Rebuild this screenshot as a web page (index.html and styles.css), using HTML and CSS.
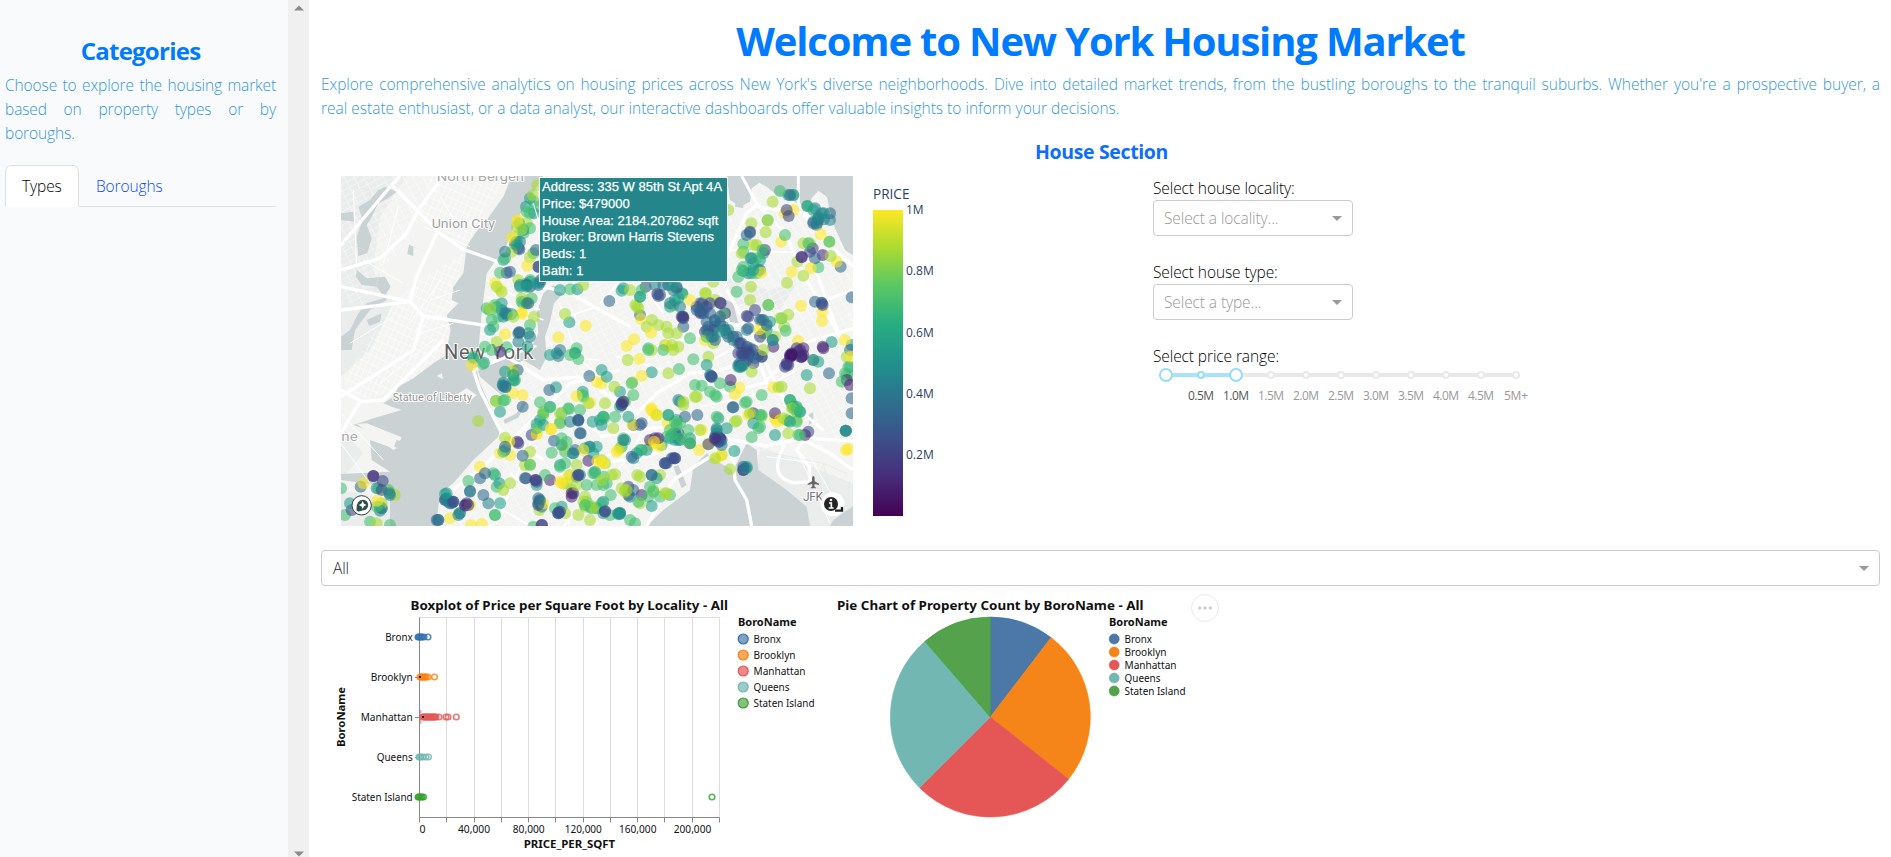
FILE: index.html
```html
<!DOCTYPE html>
<html lang="en">
<head>
<meta charset="utf-8">
<title>New York Housing Market</title>
<link rel="stylesheet" href="styles.css">
</head>
<body>
<div class="app">
  <aside class="sidebar">
    <h2 class="side-title">Categories</h2>
    <p class="side-text">Choose to explore the housing market based on property types or by boroughs.</p>
    <nav class="tabs"><a class="tab active">Types</a><a class="tab">Boroughs</a></nav>
  </aside>
  <div class="scrollbar">
    <svg width="10" height="6" viewBox="0 0 10 6"><path d="M0 5.5L5 0.5L10 5.5Z" fill="#8b8b8b"/></svg>
    <svg width="10" height="6" viewBox="0 0 10 6"><path d="M0 0.5L5 5.5L10 0.5Z" fill="#8b8b8b"/></svg>
  </div>
  <main class="main">
    <h1 class="title">Welcome to New York Housing Market</h1>
    <p class="intro"><span class="full">Explore comprehensive analytics on housing prices across New York's diverse neighborhoods. Dive into detailed market trends, from the bustling boroughs to the tranquil suburbs. Whether you're a prospective buyer, a</span> <span class="rest">real estate enthusiast, or a data analyst, our interactive dashboards offer valuable insights to inform your decisions.</span></p>
    <h3 class="section-title">House Section</h3>
    <div class="explore">
      <div class="map">
        <svg width="512" height="350" viewBox="33 18 1536 1050">
          <defs>
            <pattern id="streets" width="26" height="18" patternUnits="userSpaceOnUse" patternTransform="rotate(-28)"><path d="M0 0H26M0 0V18" stroke="#fff" stroke-width="3" fill="none"/><path d="M0 3H26" stroke="#e9ebea" stroke-width="1.5"/></pattern>
            <pattern id="streets2" width="16" height="24" patternUnits="userSpaceOnUse" patternTransform="rotate(24)"><path d="M0 0H16M0 0V24" stroke="#fff" stroke-width="3" fill="none"/></pattern>
          </defs>
          <rect x="33" y="18" width="1536" height="1050" fill="#f4f5f3"/>
          <path d="M33 18H230L150 140L130 300L190 400L120 540L33 620ZM1180 320L1320 360L1400 340L1350 420L1220 400ZM1290 830L1569 940V1068H1380L1280 900ZM33 770L100 850L33 930ZM33 960L180 990V1068H33Z" fill="#eaedec"/>
          <path d="M190 400L270 330L400 250L350 530L270 620L100 700L33 640ZM300 18H530L410 220L270 150Z" fill="url(#streets2)"/>
          <path d="M33 18H300L270 150L100 400H33ZM480 300L640 60L1569 18V820L1010 870L800 1068H330L510 800L440 620Z" fill="url(#streets)"/>
          <g fill="#cad2d4">
            <path d="M545 18L520 80L470 150L435 190L410 230L400 310L370 350L365 390L385 400L350 435L362 480L350 540L350 555L310 580L250 625L205 650L190 680L160 700L185 710L215 720L130 745L70 765L200 810L190 835L120 810L125 870L180 905L33 912V930L180 950V1068H318L330 970L370 940L430 870L505 800L510 775L450 640L440 600L455 430L470 310L530 225L560 150L640 18Z"/>
            <path d="M640 370L670 345L700 370L672 400L660 455L645 500L650 560L630 600L580 570L530 600L520 680L450 620L440 590L600 540L625 490L620 430Z"/>
            <path d="M1190 18H1569V256L1545 240L1515 175L1500 120L1490 80L1465 62L1445 85L1430 130L1390 90L1340 75L1310 50L1288 38L1265 55L1260 95L1230 110L1200 90Z"/>
            <path d="M165 50L200 65L175 85L145 100L120 150L110 165L125 205L112 250L85 258L80 200L98 150L85 110L120 90L145 60ZM33 130L70 125L72 155L33 150ZM80 300L110 325L165 320L182 350L160 385L110 400L85 430L60 480L33 500V540L65 540L75 480L120 420L170 390L140 350L95 345L78 320ZM110 450L155 430L150 455L118 468Z"/>
            <path d="M1090 890L1130 850L1170 880L1210 900L1250 820L1280 840L1285 900L1370 960L1430 1010L1440 1068H950L1000 1020L1080 960ZM1510 1050L1569 1008V1068H1500ZM1180 385L1210 400L1225 460L1200 455ZM1220 60L1240 70V115L1215 110Z"/>
            <path d="M1030 890L1045 885L1070 945L1055 955ZM1436 735L1450 725V755L1437 765ZM520 750L560 730L580 695L588 700L566 742L525 762ZM300 250L250 230V258L232 252L237 224Z"/>
          </g>
          <g fill="#f4f5f3"><path d="M80 762L110 760L215 802L210 812L160 800L200 835L190 840ZM385 670L410 655L440 675L412 700ZM320 618L335 610L340 628Z"/></g>
          <path d="M820 18L600 315M830 420L700 380" stroke="#f4f5f3" stroke-width="18" fill="none"/>
          <g stroke="#fff" fill="none" stroke-width="7" stroke-linejoin="round">
            <path stroke-width="10" d="M33 225L185 45L330 190L400 238L490 270L640 350L720 370L810 420L900 470M185 45L210 18M33 300L150 265L230 190L265 120L340 18M33 420L240 395L280 438L465 466M33 350L240 395M240 395L260 320L320 190"/>
            <path stroke-width="10" d="M33 660L95 695L160 690L240 610L340 510M33 790L90 695M280 440L250 540L33 680M430 600L450 660L510 780L640 870M430 600L530 560L640 630L760 620L820 650M330 990L460 890L640 720L720 640L870 600"/>
            <path stroke-width="10" d="M810 660L920 730L980 670L1080 610L1170 600L1300 560M810 800L1000 770L1180 805L1310 828L1420 805L1569 812M810 880L950 860L1130 790M950 1068L1030 930L1180 835M1205 820L1215 930L1250 990L1265 1068M1365 822Q1310 920 1390 938L1440 935L1438 890L1400 840L1420 810L1500 850L1569 900"/>
            <path stroke-width="9" d="M1235 18L1280 100L1365 190L1430 330L1560 550M1405 18V100L1500 225L1569 290M1190 260L1250 130L1280 105M1020 520L1200 470L1350 440L1569 360M1190 360L1280 520L1370 710L1390 810M1275 530L1310 640L1480 780M1569 475L1420 520L1300 640L1130 680M1460 310L1530 500M1280 110L1420 130L1500 240"/>
            <path stroke-width="5" d="M470 380L640 450M470 330L630 420M650 560L810 570M600 680L810 790M720 900L900 830M500 1060L600 820L650 690M400 950L600 1068M700 1068L900 860L980 700M810 400L900 300L1000 430M860 560L1000 600M450 490L620 530M1130 580L1200 540L1250 490M1110 710L1260 680L1400 600M540 910L720 1060M680 450L800 410M690 400L740 560L900 700M1190 240L1460 250"/>
            <path stroke-width="3" d="M70 60L80 290M100 270L220 340M205 110L160 280M190 440L60 520M340 320L240 460M310 510L150 640M280 170L420 230M330 80L380 160M390 360L300 390M370 460L270 490M33 730L160 870M33 820L120 940M1400 840L1500 1060M1440 860L1520 1000M1310 860L1460 880"/>
          </g>
          <g stroke="#dfe2e1" stroke-width="1.5" fill="none"><path d="M90 55L120 60V90M40 215L105 240M150 300L130 380M1330 850L1480 880L1500 960L1420 1010M1480 880L1550 910"/></g>
          <text class="city" x="342" y="568" font-size="60" textLength="268">New York</text>
          <g id="homes"></g>
          <g class="map-label" stroke="#fff" stroke-width="6" paint-order="stroke" stroke-linejoin="round">
            <text x="320" y="33" font-size="36" textLength="262" lengthAdjust="spacingAndGlyphs" fill="#aaa">North Bergen</text>
            <text x="305" y="174" font-size="39" textLength="190" lengthAdjust="spacingAndGlyphs" fill="#a2a2a2">Union City</text>
            <text x="188" y="692" font-size="33" textLength="238" fill="#929292">Statue of Liberty</text>
            <text x="34" y="814" font-size="38" textLength="49" lengthAdjust="spacingAndGlyphs" fill="#aaa">ne</text>
            <text x="1419" y="992" font-size="36" textLength="60" fill="#777">JFK</text>
          </g>
          <path d="M1450 918Q1454 918 1454 928V934L1467 941V945L1454 942L1453 949L1458 953V955H1442V953L1447 949L1446 942L1433 945V941L1446 934V928Q1446 918 1450 918Z" fill="#666"/>
          <g><circle cx="95" cy="1006" r="29" fill="#fff" stroke="#333f3d" stroke-width="3"/><path d="M80 1023Q77 991 98 989A16 16 0 1 1 99 1021Q89 1026 80 1023Z" fill="#2c504d"/><path d="M98 993L102 1001L110 1005L102 1009L98 1017L94 1009L86 1005L94 1001Z" fill="#fff"/></g>
          <circle cx="1508" cy="1003" r="36" fill="#fff" opacity=".85"/><path d="M1515 1022H1536V1011" stroke="#222" stroke-width="7" fill="none"/><circle cx="1503" cy="1002" r="21" fill="#242424"/><path d="M1497 999H1504V1013M1496 1014H1511" stroke="#fff" stroke-width="5" fill="none"/><circle cx="1503" cy="990" r="4" fill="#fff"/>
          <path d="M610 100L628 160" stroke="#fff" stroke-width="3"/>
        </svg>
        <div class="tip"><div>Address: 335 W 85th St Apt 4A</div><div>Price: $479000</div><div>House Area: 2184.207862 sqft</div><div>Broker: Brown Harris Stevens</div><div>Beds: 1</div><div>Bath: 1</div></div>
      </div>
      <div class="scale">
        <div class="scale-title">PRICE</div>
        <div class="scale-row"><div class="scale-bar"></div><div class="scale-ticks"><span>1M</span><span>0.8M</span><span>0.6M</span><span>0.4M</span><span>0.2M</span></div></div>
      </div>
      <form class="filters">
        <label>Select house locality:</label>
        <div class="select"><span>Select a locality...</span><i class="caret"></i></div>
        <label>Select house type:</label>
        <div class="select"><span>Select a type...</span><i class="caret"></i></div>
        <label>Select price range:</label>
        <svg class="slider" width="390" height="40" viewBox="0 0 390 40">
          <rect x="13" y="9" width="350" height="4" rx="2" fill="#e9e9e9"/><rect x="13" y="9" width="70" height="4" fill="#abe2fb"/>
          <g fill="#fff" stroke="#e9e9e9" stroke-width="2"><circle cx="118" cy="11" r="3"/><circle cx="153" cy="11" r="3"/><circle cx="188" cy="11" r="3"/><circle cx="223" cy="11" r="3"/><circle cx="258" cy="11" r="3"/><circle cx="293" cy="11" r="3"/><circle cx="328" cy="11" r="3"/><circle cx="363" cy="11" r="3"/></g>
          <g fill="#fff" stroke="#96dbfa" stroke-width="2"><circle cx="48" cy="11" r="3"/><circle cx="13" cy="11" r="6"/><circle cx="83" cy="11" r="6"/></g>
          <g class="marks"><text x="35" y="36" class="on" textLength="26">0.5M</text><text x="70" y="36" class="on" textLength="26">1.0M</text><text x="105" y="36" textLength="26">1.5M</text><text x="140" y="36" textLength="26">2.0M</text><text x="175" y="36" textLength="26">2.5M</text><text x="210" y="36" textLength="26">3.0M</text><text x="245" y="36" textLength="26">3.5M</text><text x="280" y="36" textLength="26">4.0M</text><text x="315" y="36" textLength="26">4.5M</text><text x="351" y="36" textLength="24">5M+</text></g>
        </svg>
      </form>
    </div>
    <div class="select wide"><span>All</span><i class="caret"></i></div>
    <svg class="charts" id="charts" width="1559" height="271" viewBox="321 586 1559 271"></svg>
  </main>
</div>
<script src="script.js"></script>
</body>
</html>
```
FILE: styles.css
```css
* { box-sizing: border-box; }
body { margin: 0; background: #fff; font-family: "Open Sans", "Noto Sans", sans-serif; font-size: 16px; color: #212529; overflow: hidden; }
.app { display: flex; height: 857px; }
.sidebar { width: 288px; padding: 36px 12px 0 5px; background: #f8fafc; flex: none; }
.scrollbar { width: 21px; padding: 5px 0 0; background: #f0f0f0; flex: none; display: flex; flex-direction: column; align-items: center; justify-content: space-between; }
.side-title { margin: 0; font-size: 24px; line-height: 29px; letter-spacing: -.75px; text-align: center; color: #007bff; }
.side-text, .intro { margin: 0; color: #3498db; font-size: 15.5px; font-weight: 300; line-height: 24px; text-align: justify; }
.side-text { margin-top: 8px; letter-spacing: -.1px; }
.tabs { display: flex; margin-top: 20px; border-bottom: 1px solid #dee2e6; height: 42px; }
.tab { padding: 8px 16px 0; height: 42px; line-height: 24px; font-size: 15.5px; font-weight: 300; color: #0d4bff; letter-spacing: -.1px; border: 1px solid transparent; }
.tab.active { background: #fff; color: #000; width: 74px; border-color: #dee2e6 #dee2e6 #fff; border-radius: 6px 6px 0 0; }
.main { flex: 1; min-width: 0; padding: 17px 11px 0 12px; overflow: hidden; }
.title { margin: 0; text-align: center; color: #007bff; font-size: 40px; line-height: 48px; letter-spacing: -1.18px; white-space: nowrap; }
.intro { margin-top: 7px; }
.intro span { display: block; white-space: nowrap; }
.intro .full { text-align-last: justify; letter-spacing: -.05px; }
.section-title { margin: 20px 0 0; padding-left: 2px; text-align: center; color: #0d6efd; font-size: 19.5px; line-height: 24px; letter-spacing: -.35px; }
.explore { display: flex; height: 370px; padding-left: 20px; margin-top: 12px; }
.map { position: relative; width: 512px; height: 350px; flex: none; overflow: hidden; }
.map svg { display: block; }
.map-label { font-family: Roboto, sans-serif; font-weight: 400; }
.city { font-family: Roboto, sans-serif; fill: #606060; stroke: #fff; stroke-width: 6; paint-order: stroke; }
.tip { position: absolute; left: 198px; top: 1px; width: 189px; height: 105px; padding: 1px 2px; background: #24868b; border: 1px solid #fff; color: #fff; font: 13px/16.8px "Liberation Sans", Arial, sans-serif; letter-spacing: .03px; -webkit-text-stroke: .25px #fff; white-space: nowrap; }
.scale { margin-left: 20px; width: 100px; padding-top: 9px; color: #2a3f5f; }
.scale-title { font-size: 13.6px; line-height: 18px; height: 25px; }
.scale-row { display: flex; gap: 3px; }
.scale-bar { width: 30px; height: 306px; background: linear-gradient(#fde725 0%, #addc30 12%, #5ec962 24%, #28ae80 37%, #21918c 50%, #2c728e 62%, #3b528b 74%, #472d7b 87%, #440154 100%); }
.scale-ticks { display: flex; flex-direction: column; gap: 45.3px; margin-top: -8px; font-size: 12px; line-height: 16px; }
.filters { margin-left: 180px; }
.filters label { display: block; font-size: 15.5px; font-weight: 300; line-height: 24px; letter-spacing: -.1px; color: #000; }
.select { display: flex; align-items: center; justify-content: space-between; width: 200px; height: 36px; margin-bottom: 24px; padding: 0 10px; border: 1px solid #ccc; border-radius: 4px; color: #999; font-size: 15.5px; font-weight: 300; letter-spacing: -.1px; }
.caret { border: 5px solid transparent; border-top-color: #999; border-bottom: 0; }
.select.wide { width: 100%; margin: 4px 0 0; padding: 0 10px 0 11px; color: #222; }
.slider { display: block; margin-top: -4px; }
.marks { font-size: 12px; fill: #999; }
.marks .on { fill: #555; }
.charts { display: block; font-family: "Noto Sans", sans-serif; font-size: 11px; fill: #111; }
.charts .strong { font-weight: 700; }
```
FILE: script.js
```js
const shades = { y: '#fde725', l: '#a8db34', g: '#44bf70', t: '#1f9e89', c: '#26828e', b: '#31688e', n: '#3e4989', p: '#482878', d: '#440154' };
// Each group: horizontal and vertical shift of the tile, then "colour x,y x,y ..." runs.
const tiles = [
  [0, 0, `l 622,45 608,75 560,170 575,178 545,245 600,262 565,330 515,365 480,415 590,392 575,385 612,440 500,515 760,345 705,432 555,200 550,440 590,160 500,350
   y 562,155 545,203 592,287 495,340 685,502 767,467 575,425 525,493 510,358 563,150 576,432
   g 600,130 612,95 590,125 568,160 600,175 580,190 510,308 590,340 495,405 478,420 605,385 580,400 490,470 505,440 740,535 530,532 465,530 600,465 720,358 625,110 601,330 610,250 575,395 485,450 525,265 470,415
   t 588,110 600,85 612,130 580,180 560,225 520,270 600,335 570,350 500,410 520,440 545,432 480,480 595,490 690,360 742,358 718,457 620,340 592,530 515,400 560,215 590,350
   c 570,215 525,245 570,345 630,338 590,400 525,430 565,490 565,515 600,500 625,345 530,435 590,345
   b 555,222 568,238 590,345 530,430 568,486 568,488 595,400 540,305 618,240 625,290 515,420 632,330
   n 530,308 625,290 600,350 565,235`],
  [810, 0, `l 518,95 497,187 454,160 503,152 385,120 425,250 460,225 592,275 610,317 692,258 561,338 453,350 450,390 505,405 565,434 315,370 318,370 111,408 106,405 115,415 90,360 156,450 205,490 230,490 195,525 140,470 216,525 175,465 540,445 553,470 525,500 345,390 610,220 630,220 688,215 200,470 235,530 470,225 340,520 340,335
   y 580,120 544,215 662,193 710,275 603,407 667,425 666,453 575,305 632,295 478,478 734,510 153,488 102,508 80,528 315,510 484,308 270,390 594,512 555,130 490,490 123,447 202,528
   g 540,63 580,75 503,150 555,195 625,220 655,292 430,222 470,310 425,300 487,240 505,405 145,535 120,380 247,370 545,445 320,500 370,430 415,320 125,360 688,215 490,490 410,365 220,405 557,482 430,245 622,108 430,290 470,265 270,505
   t 565,75 580,75 622,108 640,120 656,140 672,130 452,265 480,270 460,300 430,303 445,310 490,250 70,355 215,345 225,390 247,372 518,510 510,455 695,516 250,440 235,385 385,480 360,485 65,362 120,380 755,525 455,310 475,300 210,410 460,280 500,480
   c 645,115 665,130 640,155 650,160 672,148 455,265 480,300 190,345 220,360 210,400 345,455 380,490 400,510 518,510 485,450 440,480 240,410 230,350 165,345 655,145 690,150 415,520 370,470 335,500
   b 570,75 655,150 690,130 640,160 450,188 440,195 665,400 28,393 290,420 310,430 330,430 345,470 325,470 300,400 360,460 410,500 425,520 490,450 445,475 345,510 250,470 120,435 175,378 205,345 230,355 755,382 722,290 645,265 480,450 500,465 445,540 320,480 360,440 310,420 385,500 320,455 375,480 340,500 645,395 650,165 450,535
   n 560,120 566,138 450,185 495,240 605,260 638,235 630,245 665,398 302,430 300,425 320,410 345,450 340,480 360,398 330,400 315,485 445,440 440,438 465,420 245,440 420,520 440,530 590,535 180,375 137,350 290,410 460,540 480,500 325,490 668,405 400,500
   p 248,440 668,255 605,262 668,530 610,535 520,530 375,430 362,400 250,445 308,400 172,372`],
  [0, 540, `l 498,154 445,213 600,343 585,345 525,263 520,420 540,400 640,195 775,160 700,290 700,400 740,345 710,400 765,440 765,470 790,470 745,495 725,420 690,190 628,480 180,425 140,520 155,460 195,435 720,375 780,510 690,215 548,65 640,185 760,455 740,405 600,305 800,475 705,490
   y 425,45 548,60 578,135 548,130 538,275 540,315 510,310 450,350 100,400 620,252 663,238 760,300 780,158 740,138 802,332 690,395 420,465 360,505 423,525 455,522 800,95 640,460 142,452 695,400 620,250 663,236 715,380
   g 485,0 430,20 458,42 498,152 520,152 525,150 553,92 555,90 630,157 640,190 660,172 495,495 495,495 415,393 695,190 690,220 695,265 715,175 717,177 758,135 760,140 620,235 600,345 705,305 665,308 690,350 645,375 610,530 770,455 780,470 800,475 795,370 790,370 145,415 175,420 33,415 140,470 500,410 675,475 45,495 745,27 720,15 735,8 750,180 710,275 180,525 120,515 490,370 520,305 765,465 785,475 800,405 705,340 770,405
   t 430,25 462,38 550,90 510,185 518,105 550,75 630,210 620,222 678,112 495,375 510,460 350,430 388,490 155,475 140,415 60,460 508,400 788,215 758,125 765,295 695,285 728,310 640,225 690,345 790,310 800,290 795,365 525,65 660,15 735,10 660,170 620,405 150,470 695,470 780,290 810,210 345,432
   c 520,98 525,110 685,18 690,0 720,215 745,210 525,300 475,460 420,425 350,450 365,460 385,495 325,510 630,450 625,460 688,485 730,310 778,290 150,482 178,430 180,435 750,375 685,490 635,470 680,10 355,455
   b 520,108 527,112 563,60 578,170 658,120 778,78 750,250 752,250 745,212 672,272 525,290 578,317 460,435 420,423 345,450 370,455 365,455 390,490 325,510 625,445 628,452 745,375 735,300 450,385 585,385 465,370 320,510 360,460 685,488 155,475 630,455 92,410 350,445
   n 745,210 620,395 615,390 565,280 405,465 415,465 690,485 730,430 745,375 635,525 130,378 158,393 65,480 625,465 345,448 370,455 685,490 155,420 605,255 740,380 588,385
   p 562,275 725,430 660,390 410,460 510,5 618,390 405,467 775,332 130,378 636,525 725,440`],
  [810, 540, `l 155,0 205,70 83,30 97,97 43,110 325,20 170,195 410,212 485,200 250,155 285,140 450,190 290,140 345,325 390,358 112,375 45,373 80,420 195,430 565,250 40,235 455,65 545,110 630,115 365,315 75,420 200,430 120,460 160,420 535,112 15,160 35,375 5,330 180,375 65,415 220,0 490,0 250,165 405,215 575,175 590,180 550,205 590,210 300,240 60,295 15,340 120,380 5,390 740,20 75,425
   y 118,27 125,77 418,113 405,133 153,180 163,190 170,195 162,275 170,280 305,240 98,224 50,305 55,300 2,335 10,340 325,282 297,300 270,280 525,205 540,210 350,325 365,315 520,112 180,290 155,175 5,100 150,285 445,195 202,220 745,297 753,20 738,300 530,215
   g 145,0 190,0 237,57 280,28 305,107 345,135 390,110 485,135 435,158 440,155 485,195 480,230 575,160 580,175 590,185 565,212 455,262 350,200 205,195 225,215 220,250 265,240 270,280 230,225 45,200 12,205 70,265 200,260 120,300 150,410 115,455 160,425 105,520 90,510 30,495 10,405 5,460 745,50 725,95 740,75 755,75 640,30 600,255 595,255 475,235 570,150 600,185 590,215 10,200 100,135 75,155 360,100 285,105 330,125 350,140 215,255 245,265 210,240 480,195 210,435 32,435 145,440 180,440 560,210 240,220 12,380 20,400 590,175 95,100 735,70
   t 5,60 20,80 155,67 320,45 205,195 230,210 225,250 350,235 355,205 270,280 235,270 403,303 440,350 60,125 65,160 10,200 75,270 65,290 125,300 140,300 240,155 415,50 655,35 620,75 590,170 570,215 525,255 737,242 440,355 10,455 60,490 55,493 170,385 155,468 10,490 5,225 185,285 570,150 600,185 210,265 225,270 230,260 750,50 460,220 380,235 270,265 580,170 85,200 110,310 60,170 425,50
   c 225,250 230,260 350,240 738,242 737,242 435,355 430,360 55,490 60,492 65,165 90,440 100,325 235,150 430,45 640,30 240,270 70,270 365,285 155,375 350,250 345,260 60,488 415,45
   b 292,195 255,200 398,172 400,172 335,80 330,75 355,265 360,275 345,270 200,340 195,340 215,325 225,325 430,15 450,20 440,30 485,20 430,350 100,420 85,435 125,220 235,250 687,70 100,225 65,160 155,375 95,320 420,40 465,25 755,190 755,145 750,0
   n 335,80 333,78 425,10 445,10 440,5 460,40 485,20 420,50 355,260 360,265 355,275 350,270 365,270 325,283 220,325 225,325 195,340 565,45 555,50 560,45 15,483 15,485 575,15 600,20 445,15 415,10 85,410 120,225 65,165 595,5 355,265 625,245 430,10 475,15 350,265 425,45
   p 570,15 578,12 605,20 575,10 610,15 345,265 360,265 392,90 175,265 525,190 460,190 615,255 570,20 560,40 150,270 750,105 740,90 430,360 125,435 70,155 600,0 670,-5 165,265
   d 575,15 605,20 572,20`]
];
let homes = '';
for (const [dx, dy, text] of tiles) {
  let fill;
  const dots = [];
  for (const part of text.trim().split(/\s+/)) {
    if (shades[part]) { fill = shades[part]; continue; }
    const [x, y] = part.split(',').map(Number);
    dots.push([(x * 7919 + y * 104729) % 997, `<circle cx="${x + dx}" cy="${y + dy}" r="18" fill="${fill}"/>`]);
  }
  dots.sort((a, b) => a[0] - b[0]);
  homes += dots.map(d => d[1]).join('');
}
document.getElementById('homes').innerHTML = `<g fill-opacity=".58">${homes}</g>`;

const names = ['Bronx', 'Brooklyn', 'Manhattan', 'Queens', 'Staten Island'];
const widths = [27.5, 42, 52, 36, 61];
const colors = ['#4c78a8', '#f58518', '#e45756', '#72b7b2', '#54a24b'];
const edges = ['#3070ad', '#ff7f0e', '#e45756', '#72b7b2', '#33a02c'];
const label = (x, y, s, w, extra = '') => `<text x="${x}" y="${y}" textLength="${w}" lengthAdjust="spacingAndGlyphs" ${extra}>${s}</text>`;
let out = '';
for (let i = 0; i <= 11; i++) {
  const x = Math.round(419 + i * 27.27) + .5;
  out += `<path d="M${x} 617.5V817.5" stroke="#ddd"/><path d="M${x} 817.5V822.5" stroke="#888"/>`;
}
out += '<path d="M419.5 617.5H719.5" stroke="#ddd"/><path d="M419.5 617.5V817.5H719.5" stroke="#888" fill="none"/>';
const points = [[418, 419, 420, 421, 422, 424, 428], [420, 421, 422, 423, 424, 425, 426, 428, 434.5], [423, 424, 425, 426, 427, 428, 429, 430, 431, 432, 433, 434, 435, 436, 439, 446, 448, 456.3], [419, 420, 421, 423, 426, 428.5], [418, 419, 420, 421, 422, 423.5, 712]];
names.forEach((n, i) => {
  const y = 637 + i * 40;
  out += `<path d="M415 ${y + .5}H419" stroke="#888"/>` + label(412.7, y + 4, n, widths[i], 'text-anchor="end"');
  out += points[i].map(x => `<circle cx="${x}" cy="${y}" r="2.8" fill="none" stroke="${edges[i]}" stroke-width="1.6" opacity=".8"/>`).join('');
  const ly = 639 + i * 16, py = 639 + i * 13;
  out += `<circle cx="743.2" cy="${ly}" r="5" fill="${colors[i]}" fill-opacity=".7" stroke="${edges[i]}" stroke-width="1.2"/>` + label(753.5, ly + 3.5, n, widths[i]);
  out += `<circle cx="1114.2" cy="${py}" r="5" fill="${colors[i]}" stroke="${edges[i]}" stroke-width=".6"/>` + label(1124.5, py + 3.5, n, widths[i]);
});
out += '<path d="M420.5 710V724" stroke="#e45756" stroke-width="2" opacity=".5"/><path d="M422 717H424M419 677H421" stroke="#222" stroke-width="2"/>';
[[0, 6, 422.5], [40000, 32, 474], [80000, 32, 528.7], [120000, 37, 583.3], [160000, 37.5, 637.7], [200000, 37.5, 692.5]].forEach(([v, w, x]) => {
  out += label(x, 833, v.toLocaleString('en-US'), w, 'text-anchor="middle"');
});
out += label(523.7, 847.5, 'PRICE_PER_SQFT', 91.5, 'class="strong"');
out += label(0, 0, 'BoroName', 60, 'class="strong" text-anchor="middle" transform="translate(345 717) rotate(-90)"');
out += label(410.5, 610, 'Boxplot of Price per Square Foot by Locality - All', 317.5, 'class="strong" font-size="13"');
out += label(837, 610, 'Pie Chart of Property Count by BoroName - All', 306.5, 'class="strong" font-size="13"');
out += label(738, 626, 'BoroName', 58.5, 'class="strong"') + label(1109, 626, 'BoroName', 58.5, 'class="strong"');
const cuts = [0, 37.4, 128.5, 225, 319.2, 360];
const rim = a => `${990.3 + 100 * Math.sin(a * Math.PI / 180)} ${717 - 100 * Math.cos(a * Math.PI / 180)}`;
colors.forEach((c, i) => {
  out += `<path d="M990.3 717L${rim(cuts[i])}A100 100 0 0 1 ${rim(cuts[i + 1])}Z" fill="${c}" stroke="${edges[i]}" stroke-width=".6"/>`;
});
out += '<circle cx="1205" cy="608" r="13.5" fill="#fff" stroke="#eaeaea"/><g fill="#d0d0d0"><circle cx="1199.7" cy="608" r="1.8"/><circle cx="1205" cy="608" r="1.8"/><circle cx="1210.3" cy="608" r="1.8"/></g>';
document.getElementById('charts').innerHTML = out;
```
